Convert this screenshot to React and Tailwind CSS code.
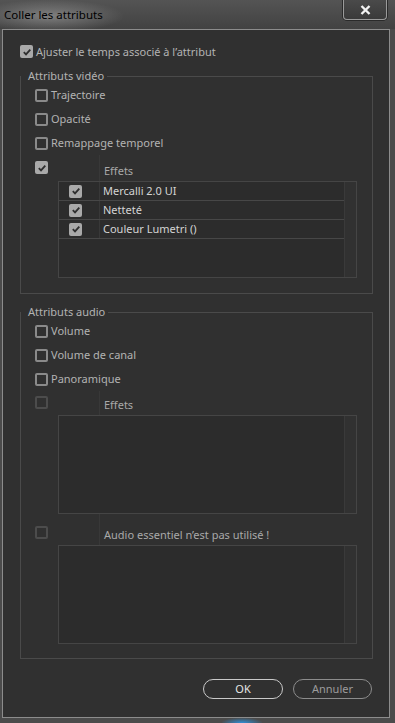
import React from 'react';

const Box = ({ checked, disabled }) => {
  if (checked) {
    return (
      <div className="w-[13px] h-[13px] rounded-[2px] bg-[#a9a9a9] flex items-center justify-center shrink-0">
        <svg width="10" height="10" viewBox="0 0 10 10">
          <path d="M1.8 5.2 L4 7.4 L8.3 2.6" fill="none" stroke="#2e2e2e" strokeWidth="1.8" />
        </svg>
      </div>
    );
  }
  return (
    <div
      className={`w-[13px] h-[13px] rounded-[2px] border-2 shrink-0 ${
        disabled ? 'border-[#4c4c4c]' : 'border-[#8a8a8a]'
      }`}
    />
  );
};

const Option = ({ label, checked }) => (
  <div className="h-[24px] pl-[14px] flex items-center gap-[3px]">
    <Box checked={checked} />
    <span className="text-[11px] text-[#b3b3b3]">{label}</span>
  </div>
);

const ListBox = ({ items = [], height }) => (
  <div className={`ml-[37px] w-[299px] ${height} border border-[#454545] bg-[#2c2c2c] flex`}>
    <div className="flex-1 flex flex-col">
      {items.map((it) => (
        <div key={it} className="h-[19px] flex border-b border-[#474747]">
          <div className="w-[41px] pl-[10px] flex items-center border-r border-[#383838]">
            <Box checked />
          </div>
          <span className="pl-[3px] text-[11px] leading-[18px] text-[#d4d4d4]">{it}</span>
        </div>
      ))}
    </div>
    <div className="w-[12px] bg-[#313131] border-l border-[#3a3a3a]" />
  </div>
);

const Header = ({ label, checked, disabled, rowClass, boxClass }) => (
  <div className={`flex pl-[14px] ${rowClass}`}>
    <div className={boxClass}>
      <Box checked={checked} disabled={disabled} />
    </div>
    <div className="ml-[51px] border-l border-[#383838] pl-[4px] flex items-end pb-[3px]">
      <span className="text-[11px] leading-[14px] text-[#a9a9a9]">{label}</span>
    </div>
  </div>
);

const Group = ({ title, children, className = '' }) => (
  <fieldset className={`ml-[17px] w-[353px] border border-[#4a4a4a] ${className}`}>
    <legend className="pl-[7px] pr-[3px] text-[11px] leading-[14px] text-[#b3b3b3]">{title}</legend>
    {children}
  </fieldset>
);

export default function App() {
  return (
    <div className="w-[395px] h-[723px] bg-[#4b4b4b] font-['Noto_Sans',sans-serif] overflow-hidden flex flex-col">
      <div className="h-[29px] flex justify-between bg-gradient-to-b from-[#545454] to-[#424242]">
        <div className="flex items-center pl-[4px] pr-[20px] bg-[radial-gradient(ellipse_at_40%_55%,rgba(170,170,170,0.55),transparent_72%)]">
          <span className="text-[11.5px] text-black">Coller les attributs</span>
        </div>
        <div className="mr-[7px] w-[46px] h-[21px] rounded-b-[5px] border border-t-0 border-[#2a2a2a] bg-[#3e3e3e]">
          <div className="h-full rounded-b-[4px] border border-t-0 border-[#9b9b9b] flex items-center justify-center bg-gradient-to-b from-[#4a4a4a] to-[#3a3a3a]">
            <svg width="11" height="10" viewBox="0 0 11 10">
              <path d="M1.5 1 L9.5 9 M9.5 1 L1.5 9" stroke="#f2f2f2" strokeWidth="2.4" />
            </svg>
          </div>
        </div>
      </div>

      <div className="ml-[2px] w-[388px] h-[689px] border border-[#8c8c8c] bg-[#303030] flex flex-col">
        <div className="mt-[15px] pl-[17px] flex items-center gap-[3px]">
          <Box checked />
          <span className="text-[11px] leading-[13px] text-[#b3b3b3]">Ajuster le temps associé à l’attribut</span>
        </div>

        <Group title="Attributs vidéo" className="mt-[11px] pb-[15px]">
          <Option label="Trajectoire" />
          <Option label="Opacité" />
          <Option label="Remappage temporel" />
          <Header label="Effets" checked rowClass="h-[26px]" boxClass="pt-[6px]" />
          <ListBox height="h-[97px]" items={['Mercalli 2.0 UI', 'Netteté', 'Couleur Lumetri ()']} />
        </Group>

        <Group title="Attributs audio" className="mt-[11px] pb-[14px]">
          <Option label="Volume" />
          <Option label="Volume de canal" />
          <Option label="Panoramique" />
          <Header label="Effets" disabled rowClass="h-[24px]" boxClass="pt-[5px]" />
          <ListBox height="h-[99px]" />
          <Header label="Audio essentiel n’est pas utilisé !" disabled rowClass="h-[31px]" boxClass="pt-[12px]" />
          <ListBox height="h-[99px]" />
        </Group>

        <div className="mt-[20px] pr-[17px] flex justify-end gap-[10px]">
          <button className="w-[80px] h-[20px] rounded-full border border-[#c9c9c9] text-[11px] leading-[18px] text-[#e6e6e6]">
            OK
          </button>
          <button className="w-[79px] h-[20px] rounded-full border border-[#8c8c8c] text-[11px] leading-[18px] text-[#9c9c9c]">
            Annuler
          </button>
        </div>
      </div>

      <div className="ml-[222px] w-[40px] h-[5px] bg-[radial-gradient(ellipse_at_50%_100%,#2f8fd8,transparent_75%)]" />
    </div>
  );
}
